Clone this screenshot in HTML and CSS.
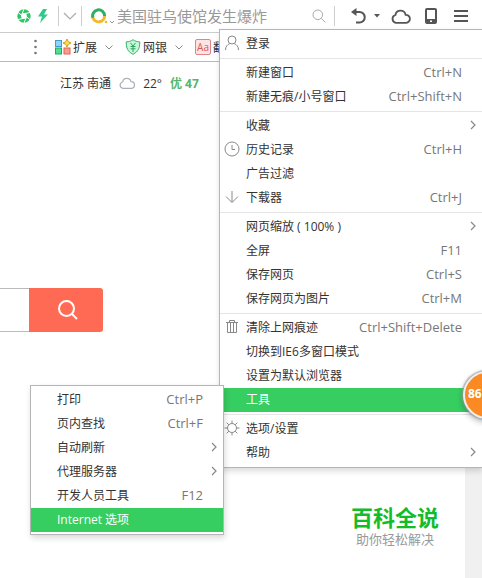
FILE: index.html
```html
<!DOCTYPE html>
<html lang="zh-CN">
<head>
  <meta charset="UTF-8">
  <title>浏览器菜单</title>
  <meta name="viewport" content="width=device-width, initial-scale=1.0">
  <link rel="stylesheet" href="styles.css">
</head>
<body>
  <header class="toolbar">
    <button class="icon-btn" aria-label="极速模式">
      <svg width="14" height="14" viewBox="0 0 14 14">
        <circle cx="7" cy="7" r="4.800" fill="none" stroke="#2fc466" stroke-width="3.800"/>
        <path d="M7 0L5 5M13 3.500l-5 1M13 10.500l-4-3M7 14l2-5M1 10.500l5-1M1 3.500l4 3" stroke="#fff" stroke-width="1"/>
      </svg>
    </button>
    <button class="icon-btn bolt" aria-label="加速">
      <svg width="10" height="14" viewBox="0 0 10 14"><path d="M5 0L0 7.500h4L2 14l8-8.500H6L9 0z" fill="#2fc98a"/></svg>
    </button>
    <span class="divider"></span>
    <button class="icon-btn drop" aria-label="展开">
      <svg width="14" height="8" viewBox="0 0 14 8"><path d="M1 1l6 6 6-6" fill="none" stroke="#aaa" stroke-width="1.2"/></svg>
    </button>
    <span class="divider"></span>
    <form class="search">
      <svg class="engine" width="26" height="16" viewBox="0 0 26 16">
        <path d="M2 10A6 6 0 1 1 13.600 8" fill="none" stroke="#2eae62" stroke-width="3"/>
        <path d="M2 10A6 6 0 0 0 13.600 8" fill="none" stroke="#f2b92b" stroke-width="3"/>
        <circle cx="15" cy="14" r="1.300" fill="#f2b92b"/>
        <path d="M19 13l2 2 2-2" fill="none" stroke="#999" stroke-width="1"/>
      </svg>
      <input type="text" aria-label="搜索" placeholder="美国驻乌使馆发生爆炸">
      <button class="icon-btn" type="button" aria-label="搜索">
        <svg width="14" height="14" viewBox="0 0 14 14"><circle cx="5.800" cy="5.800" r="4.800" fill="none" stroke="#aaa"/><path d="M9.300 9.300L13.500 13.500" stroke="#aaa"/></svg>
      </button>
    </form>
    <span class="divider"></span>
    <div class="tools">
      <button class="icon-btn" aria-label="恢复">
        <svg width="15" height="16" viewBox="0 0 15 16"><path d="M2 4h6.500a5 5 0 0 1 0 10.500H5" fill="none" stroke="#555" stroke-width="2"/><path d="M0 4l5.500-4v8z" fill="#555"/></svg>
      </button>
      <button class="icon-btn" aria-label="更多">
        <svg width="6" height="4" viewBox="0 0 6 4"><path d="M0 0h6L3 3.500z" fill="#555"/></svg>
      </button>
      <button class="icon-btn cloud" aria-label="云同步">
        <svg width="20" height="15" viewBox="0 0 20 15"><path d="M5 13.800a4 4 0 0 1-.6-7.800A5.200 5.200 0 0 1 14.600 5.800a4 4 0 0 1 .6 8z" fill="none" stroke="#555" stroke-width="1.800"/></svg>
      </button>
      <button class="icon-btn phone" aria-label="手机">
        <svg width="12" height="16" viewBox="0 0 12 16"><rect x="1" y="1" width="10" height="14" rx="1" fill="none" stroke="#555" stroke-width="2"/><path d="M1 13h10" stroke="#555" stroke-width="4"/><rect x="5" y="12.500" width="2" height="1.500" fill="#fff"/></svg>
      </button>
      <button class="icon-btn" aria-label="菜单">
        <svg width="14" height="12" viewBox="0 0 14 12"><path d="M0 1h14M0 6h14M0 11h14" stroke="#555" stroke-width="2"/></svg>
      </button>
    </div>

    <ul class="menu main-menu">
      <li><button class="item"><svg class="lead" width="16" height="16" viewBox="0 0 16 16"><circle cx="8" cy="5" r="4"/><path d="M1.500 15c0-3.500 2-5.500 4-6.200M14.500 15c0-3.500-2-5.500-4-6.200"/></svg>登录</button></li>
      <li class="sep"></li>
      <li><button class="item">新建窗口<kbd>Ctrl+N</kbd></button></li>
      <li><button class="item">新建无痕/小号窗口<kbd>Ctrl+Shift+N</kbd></button></li>
      <li class="sep"></li>
      <li><button class="item">收藏<svg class="more" width="6" height="10" viewBox="0 0 6 10"><path d="M1 1l4 4-4 4"/></svg></button></li>
      <li><button class="item"><svg class="lead" width="16" height="16" viewBox="0 0 16 16"><circle cx="8" cy="8" r="7"/><path d="M8 4v4.500h3"/></svg>历史记录<kbd>Ctrl+H</kbd></button></li>
      <li><button class="item">广告过滤</button></li>
      <li><button class="item"><svg class="lead" width="16" height="16" viewBox="0 0 16 16"><path d="M8 2v11M2 7.500l6 6 6-6"/></svg>下载器<kbd>Ctrl+J</kbd></button></li>
      <li class="sep"></li>
      <li><button class="item">网页缩放 ( 100% )<svg class="more" width="6" height="10" viewBox="0 0 6 10"><path d="M1 1l4 4-4 4"/></svg></button></li>
      <li><button class="item">全屏<kbd>F11</kbd></button></li>
      <li><button class="item">保存网页<kbd>Ctrl+S</kbd></button></li>
      <li><button class="item">保存网页为图片<kbd>Ctrl+M</kbd></button></li>
      <li class="sep"></li>
      <li><button class="item"><svg class="lead" width="16" height="16" viewBox="0 0 16 16"><path d="M2 3.500h12M5.500 3.500v-2h5v2M3.500 3.500v10h9v-10M6.500 4v9M9.500 4v9"/></svg>清除上网痕迹<kbd>Ctrl+Shift+Delete</kbd></button></li>
      <li><button class="item">切换到IE6多窗口模式</button></li>
      <li><button class="item">设置为默认浏览器</button></li>
      <li class="has-sub">
        <button class="item active">工具</button>
        <ul class="menu sub-menu">
          <li><button class="item">打印<kbd>Ctrl+P</kbd></button></li>
          <li><button class="item">页内查找<kbd>Ctrl+F</kbd></button></li>
          <li><button class="item">自动刷新<svg class="more" width="6" height="10" viewBox="0 0 6 10"><path d="M1 1l4 4-4 4"/></svg></button></li>
          <li><button class="item">代理服务器<svg class="more" width="6" height="10" viewBox="0 0 6 10"><path d="M1 1l4 4-4 4"/></svg></button></li>
          <li><button class="item">开发人员工具<kbd>F12</kbd></button></li>
          <li><button class="item active">Internet 选项</button></li>
        </ul>
        <div class="badge-clip"><span class="badge">86</span></div>
      </li>
      <li class="sep"></li>
      <li><button class="item"><svg class="lead" width="16" height="16" viewBox="0 0 16 16"><circle cx="8" cy="8" r="4.500"/><path d="M8 .5v3M8 12.500v3M.5 8h3M12.500 8h3M2.700 2.700l2.100 2.100M11.200 11.200l2.100 2.100M2.700 13.300l2.100-2.100M11.200 4.800l2.100-2.100"/></svg>选项/设置</button></li>
      <li><button class="item">帮助<svg class="more" width="6" height="10" viewBox="0 0 6 10"><path d="M1 1l4 4-4 4"/></svg></button></li>
    </ul>
  </header>

  <nav class="bookmarks">
    <svg class="grip" width="3" height="16" viewBox="0 0 3 16"><g fill="#777"><circle cx="1.500" cy="2" r="1.300"/><circle cx="1.500" cy="8" r="1.300"/><circle cx="1.500" cy="14" r="1.300"/></g></svg>
    <a class="mark" href="#">
      <svg width="16" height="16" viewBox="0 0 16 16"><rect x=".5" y="1.500" width="6" height="6" fill="#8fd3f5" stroke="#3d9cd0"/><rect x=".5" y="9" width="6" height="6" fill="#4fe08c" stroke="#23a75c"/><rect x="9" y="9" width="6" height="6" fill="#ff9a90" stroke="#e0635a"/><path d="M12 0l1.300 2.700L16 4l-2.700 1.300L12 8l-1.300-2.700L8 4l2.700-1.300z" fill="#ffe04a" stroke="#d39a1a"/></svg>
      扩展
      <svg class="caret" width="8" height="5" viewBox="0 0 8 5"><path d="M.5.5L4 4 7.500.5"/></svg>
    </a>
    <a class="mark" href="#">
      <svg width="16" height="16" viewBox="0 0 16 16"><path d="M8 .7c2 1.500 4 2 6.800 2.200 0 6-1.300 9.600-6.800 12.400C2.500 12.500 1.200 8.900 1.200 2.900 4 2.700 6 2.200 8 .7z" fill="#c9f5da" stroke="#35b56a"/><path d="M5.500 4L8 7l2.500-3M8 7v6M5.500 7.500h5M5.500 9.800h5" fill="none" stroke="#28a55a"/></svg>
      网银
      <svg class="caret" width="8" height="5" viewBox="0 0 8 5"><path d="M.5.5L4 4 7.500.5"/></svg>
    </a>
    <a class="mark" href="#"><span class="aa">Aa</span>翻译</a>
  </nav>

  <main class="page">
    <div class="content">
      <div class="weather">
        <span>江苏 南通</span>
        <svg width="16" height="12" viewBox="0 0 16 12"><path d="M4 11.300a3.200 3.200 0 0 1-.4-6.300A4.300 4.300 0 0 1 12 4.700a3.300 3.300 0 0 1 .3 6.600z" fill="none" stroke="#a9b0bb" stroke-width="1.200"/></svg>
        <span>22°</span>
        <strong>优 47</strong>
      </div>
      <form class="page-search">
        <input type="text" aria-label="网页搜索">
        <button type="button" aria-label="搜索">
          <svg width="20" height="20" viewBox="0 0 20 20"><circle cx="8.500" cy="8.500" r="7.500" fill="none" stroke="#fff" stroke-width="2"/><path d="M13.500 13.500L19 19" stroke="#fff" stroke-width="2"/></svg>
        </button>
      </form>
      <div class="brand">
        <div class="brand-name">百科全说</div>
        <div class="brand-desc">助你轻松解决</div>
      </div>
    </div>
    <div class="scrollbar"></div>
  </main>
</body>
</html>
```
FILE: styles.css
```css
* { box-sizing: border-box; }
body {
  margin: 0;
  height: 100vh;
  display: flex;
  flex-direction: column;
  overflow: hidden;
  font-family: "Open Sans", "Noto Sans CJK SC", sans-serif;
  font-size: 12px;
  color: #333;
  background: #fff;
}
button, input {
  font: inherit;
  color: inherit;
  border: none;
  background: none;
  padding: 0;
}
svg { display: block; flex-shrink: 0; }

/* Toolbar */
.toolbar {
  position: relative;
  z-index: 2;
  display: flex;
  align-items: center;
  height: 33px;
  padding: 0 14px 0 17px;
  border-bottom: 1px solid #ccc;
}
.bolt { margin: 0 10px 0 7px; }
.drop { margin: 0 4px; }
.divider {
  width: 1px;
  height: 20px;
  background: #ccc;
}
.search {
  flex: 1;
  display: flex;
  align-items: center;
  min-width: 0;
  padding: 0 8px 0 9px;
}
.search input {
  flex: 1;
  min-width: 0;
  font-size: 15px;
  outline: none;
}
.search input::placeholder { color: #999; }
.tools {
  display: flex;
  align-items: center;
  gap: 8px;
  padding-left: 16px;
}
.cloud { margin-left: 3px; }
.phone { margin: 0 9px 0 6px; }

/* Bookmarks */
.bookmarks {
  display: flex;
  align-items: center;
  gap: 12px;
  height: 29px;
  padding-left: 34px;
  border-bottom: 1px solid #bbb;
}
.grip { margin-right: 6px; }
.mark {
  display: flex;
  align-items: center;
  gap: 2px;
  color: #333;
  text-decoration: none;
  white-space: nowrap;
}
.caret {
  margin-left: 6px;
  fill: none;
  stroke: #888;
}
.aa {
  width: 16px;
  border: 1px solid #e08585;
  border-radius: 2px;
  background: #fde3e3;
  color: #d65a5a;
  font-size: 10px;
  line-height: 14px;
  text-align: center;
}

/* Menus */
.menu {
  position: absolute;
  margin: 0;
  padding: 2px 0;
  list-style: none;
  background: #fff;
  border: 1px solid #b5b5b5;
  box-shadow: 1px 3px 6px rgba(0,0,0,0.15);
}
.main-menu {
  top: 29px;
  right: 0;
  width: 263px;
  border-right: none;
}
.item {
  display: flex;
  align-items: center;
  width: 100%;
  height: 24px;
  padding: 0 20px 2px 26px;
  white-space: nowrap;
}
.item kbd {
  margin-left: auto;
  font-family: inherit;
  font-size: 13px;
  color: #777;
}
.item.active {
  background: #36cd61;
  color: #fff;
}
.lead, .more {
  fill: none;
  stroke: #888;
}
.lead {
  margin: 0 6px 0 -22px;
}
.more {
  margin: 0 -14px 0 auto;
  stroke-width: 1.2;
}
.sep {
  height: 1px;
  margin: 2px 0;
  background: #e5e5e5;
}
.has-sub { position: relative; }
.sub-menu {
  top: -3px;
  right: calc(100% - 4px);
  width: 194px;
}

/* Round counter, cut off by the window edge */
.badge-clip {
  position: absolute;
  top: -22px;
  right: 0;
  width: 26px;
  padding: 5px 0 12px 7px;
  overflow: hidden;
}
.badge {
  display: block;
  width: 48px;
  height: 48px;
  padding-left: 3px;
  border: 2px solid #eee;
  border-radius: 50%;
  background: #fb8a24;
  box-shadow: 0 0 2px 1px #999, 0 3px 6px rgba(0,0,0,0.3);
  color: #fff;
  font-weight: 700;
  line-height: 42px;
}

/* Page */
.page {
  flex: 1;
  display: flex;
  min-height: 0;
}
.content {
  flex: 1;
  display: flex;
  flex-direction: column;
}
.scrollbar {
  width: 17px;
  background: #f0f0f0;
}
.weather {
  display: flex;
  align-items: center;
  gap: 8px;
  padding: 12px 0 0 60px;
}
.weather strong { color: #56b66d; }
.page-search {
  display: flex;
  width: 103px;
  height: 44px;
  margin-top: 196px;
}
.page-search input {
  flex: 1;
  min-width: 0;
  border: 1px solid #bbb;
  border-width: 1px 0;
}
.page-search button {
  display: flex;
  align-items: center;
  justify-content: center;
  width: 74px;
  padding-left: 4px;
  border-radius: 0 3px 3px 0;
  background: #ff6a55;
}
.brand {
  align-self: flex-end;
  margin: auto 26px 30px 0;
  text-align: center;
}
.brand-name {
  font-size: 22px;
  font-weight: 700;
  line-height: 26px;
  color: #12bd2c;
}
.brand-desc {
  font-size: 13px;
  line-height: 18px;
  color: #999;
}
```
